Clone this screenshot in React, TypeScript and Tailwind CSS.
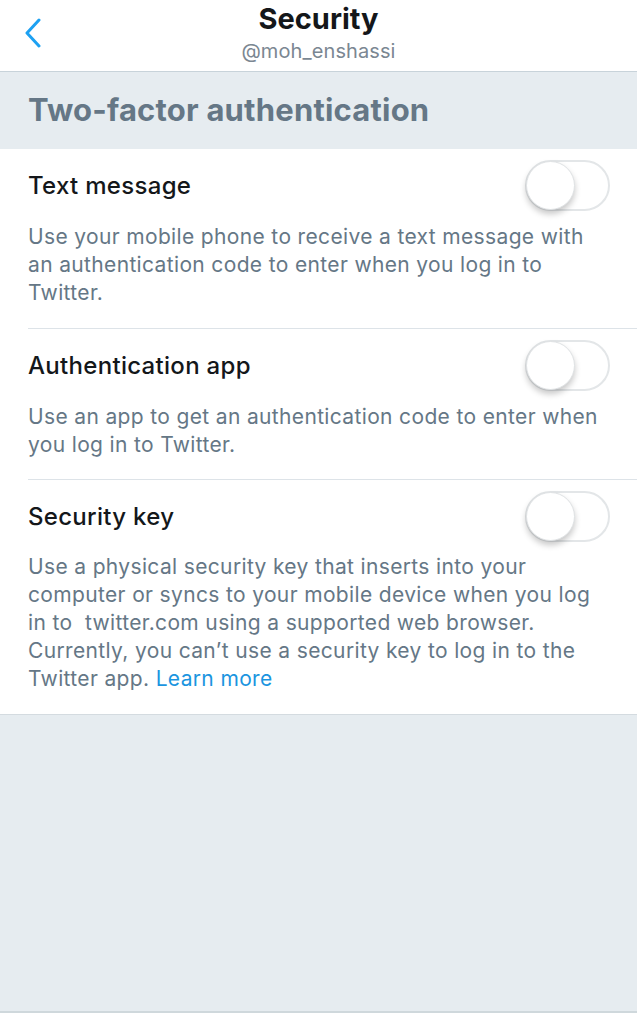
import React from "react";

type Option = {
  title: string;
  desc: React.ReactNode;
  pad: string;
};

const options: Option[] = [
  {
    title: "Text message",
    desc: "Use your mobile phone to receive a text message with an authentication code to enter when you log in to Twitter.",
    pad: "pb-[21px]",
  },
  {
    title: "Authentication app",
    desc: "Use an app to get an authentication code to enter when you log in to Twitter.",
    pad: "pb-[20px]",
  },
  {
    title: "Security key",
    desc: (
      <>
        Use a physical security key that inserts into your computer or syncs to your mobile device when you log in to&nbsp; twitter.com using a supported web browser. Currently, you can’t use a security key to log in to the Twitter app.{" "}
        <span className="text-[#1b95e0]">Learn more</span>
      </>
    ),
    pad: "pb-[21px]",
  },
];

function Toggle() {
  return (
    <div className="relative w-[85px] h-[51px] rounded-full border-2 border-[#e3e6e8] bg-white shrink-0">
      <div className="absolute -left-[1px] -top-[1px] w-[49px] h-[49px] rounded-full bg-white border border-[#dfe2e4] shadow-[0_4px_6px_rgba(0,0,0,0.22)]" />
    </div>
  );
}

export default function App() {
  return (
    <div
      className="w-[637px] h-[1024px] flex flex-col bg-[#e6ecf0] overflow-hidden"
      style={{ fontFamily: "Inter, 'Noto Sans', sans-serif" }}
    >
      {/* header */}
      <div className="relative h-[72px] bg-white border-b border-[#c8d3da] flex flex-col items-center shrink-0">
        <svg
          className="absolute left-[24px] top-[18px]"
          width="18"
          height="30"
          viewBox="0 0 18 30"
          fill="none"
        >
          <path d="M15 2 L3 15 L15 28" stroke="#1da1f2" strokeWidth="3" strokeLinecap="round" strokeLinejoin="round" />
        </svg>
        <h1 className="mt-[1px] text-[29px] leading-[36px] font-bold text-[#14171a]">Security</h1>
        <p className="mt-[1px] text-[20px] leading-[26px] text-[#7b8792] tracking-[0.1px]">@moh_enshassi</p>
      </div>

      {/* section heading */}
      <div className="h-[77px] flex items-center px-[28px] shrink-0">
        <h2 className="text-[31px] font-bold text-[#657786] tracking-[0.2px]">Two-factor authentication</h2>
      </div>

      {/* options */}
      <div className="bg-white border-b border-[#d4dbe0] shrink-0">
        {options.map((o, i) => (
          <div key={i} className="pl-[28px]">
            <div
              className={`pt-[11px] ${o.pad} ${i < options.length - 1 ? "border-b border-[#dde3e8]" : ""}`}
            >
              <div className="flex items-center justify-between pr-[27px]">
                <span className="text-[24px] font-medium text-[#14171a] tracking-[0.3px]">{o.title}</span>
                <Toggle />
              </div>
              <p className={`${i === 2 ? "mt-[11px]" : "mt-[12px]"} w-[585px] text-[21px] leading-[28px] text-[#657786] tracking-[0.35px]`}>
                {o.desc}
              </p>
            </div>
          </div>
        ))}
      </div>

      <div className="flex-1" />
      <div className="h-[13px] bg-white border-t-2 border-[#cfd8dc] shrink-0" />
    </div>
  );
}
